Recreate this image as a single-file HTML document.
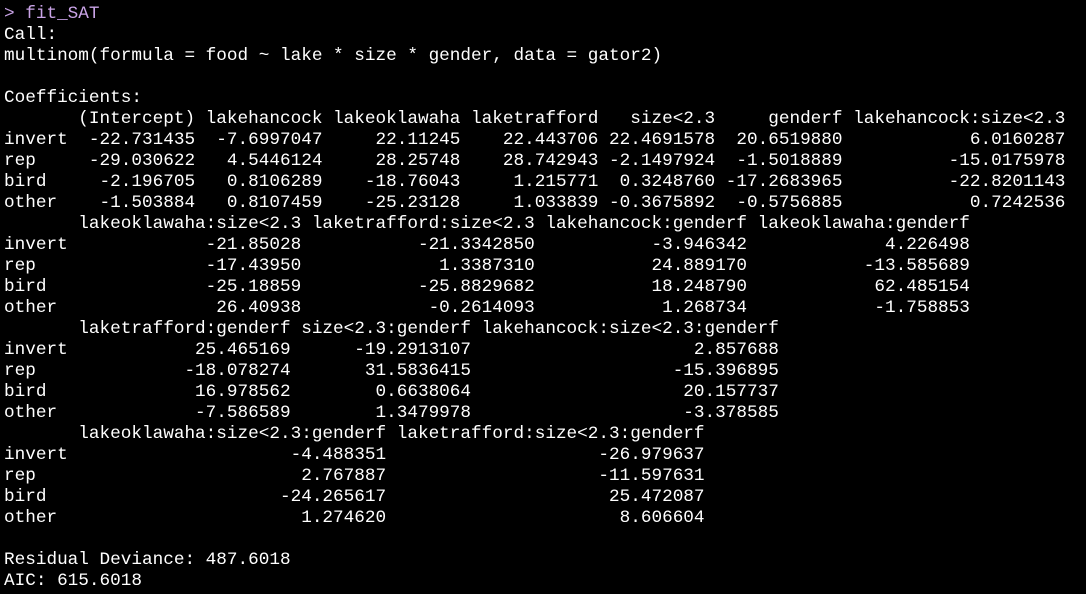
<!DOCTYPE html>
<html><head><meta charset="utf-8"><style>
html,body{margin:0;padding:0;background:#000;width:1086px;height:594px;overflow:hidden}
pre{margin:0;position:absolute;left:4px;top:4px;font-family:"Liberation Mono",monospace;font-size:17.7px;line-height:21px;color:#fff}
.p{color:#c9a3e6}
</style></head><body><pre><span class="p">&gt; fit_SAT</span>
Call:
multinom(formula = food ~ lake * size * gender, data = gator2)

Coefficients:
       (Intercept) lakehancock lakeoklawaha laketrafford   size&lt;2.3     genderf lakehancock:size&lt;2.3
invert  -22.731435  -7.6997047     22.11245    22.443706 22.4691578  20.6519880            6.0160287
rep     -29.030622   4.5446124     28.25748    28.742943 -2.1497924  -1.5018889          -15.0175978
bird     -2.196705   0.8106289    -18.76043     1.215771  0.3248760 -17.2683965          -22.8201143
other    -1.503884   0.8107459    -25.23128     1.033839 -0.3675892  -0.5756885            0.7242536
       lakeoklawaha:size&lt;2.3 laketrafford:size&lt;2.3 lakehancock:genderf lakeoklawaha:genderf
invert             -21.85028           -21.3342850           -3.946342             4.226498
rep                -17.43950             1.3387310           24.889170           -13.585689
bird               -25.18859           -25.8829682           18.248790            62.485154
other               26.40938            -0.2614093            1.268734            -1.758853
       laketrafford:genderf size&lt;2.3:genderf lakehancock:size&lt;2.3:genderf
invert            25.465169      -19.2913107                     2.857688
rep              -18.078274       31.5836415                   -15.396895
bird              16.978562        0.6638064                    20.157737
other             -7.586589        1.3479978                    -3.378585
       lakeoklawaha:size&lt;2.3:genderf laketrafford:size&lt;2.3:genderf
invert                     -4.488351                    -26.979637
rep                         2.767887                    -11.597631
bird                      -24.265617                     25.472087
other                       1.274620                      8.606604

Residual Deviance: 487.6018 
AIC: 615.6018 </pre></body></html>
